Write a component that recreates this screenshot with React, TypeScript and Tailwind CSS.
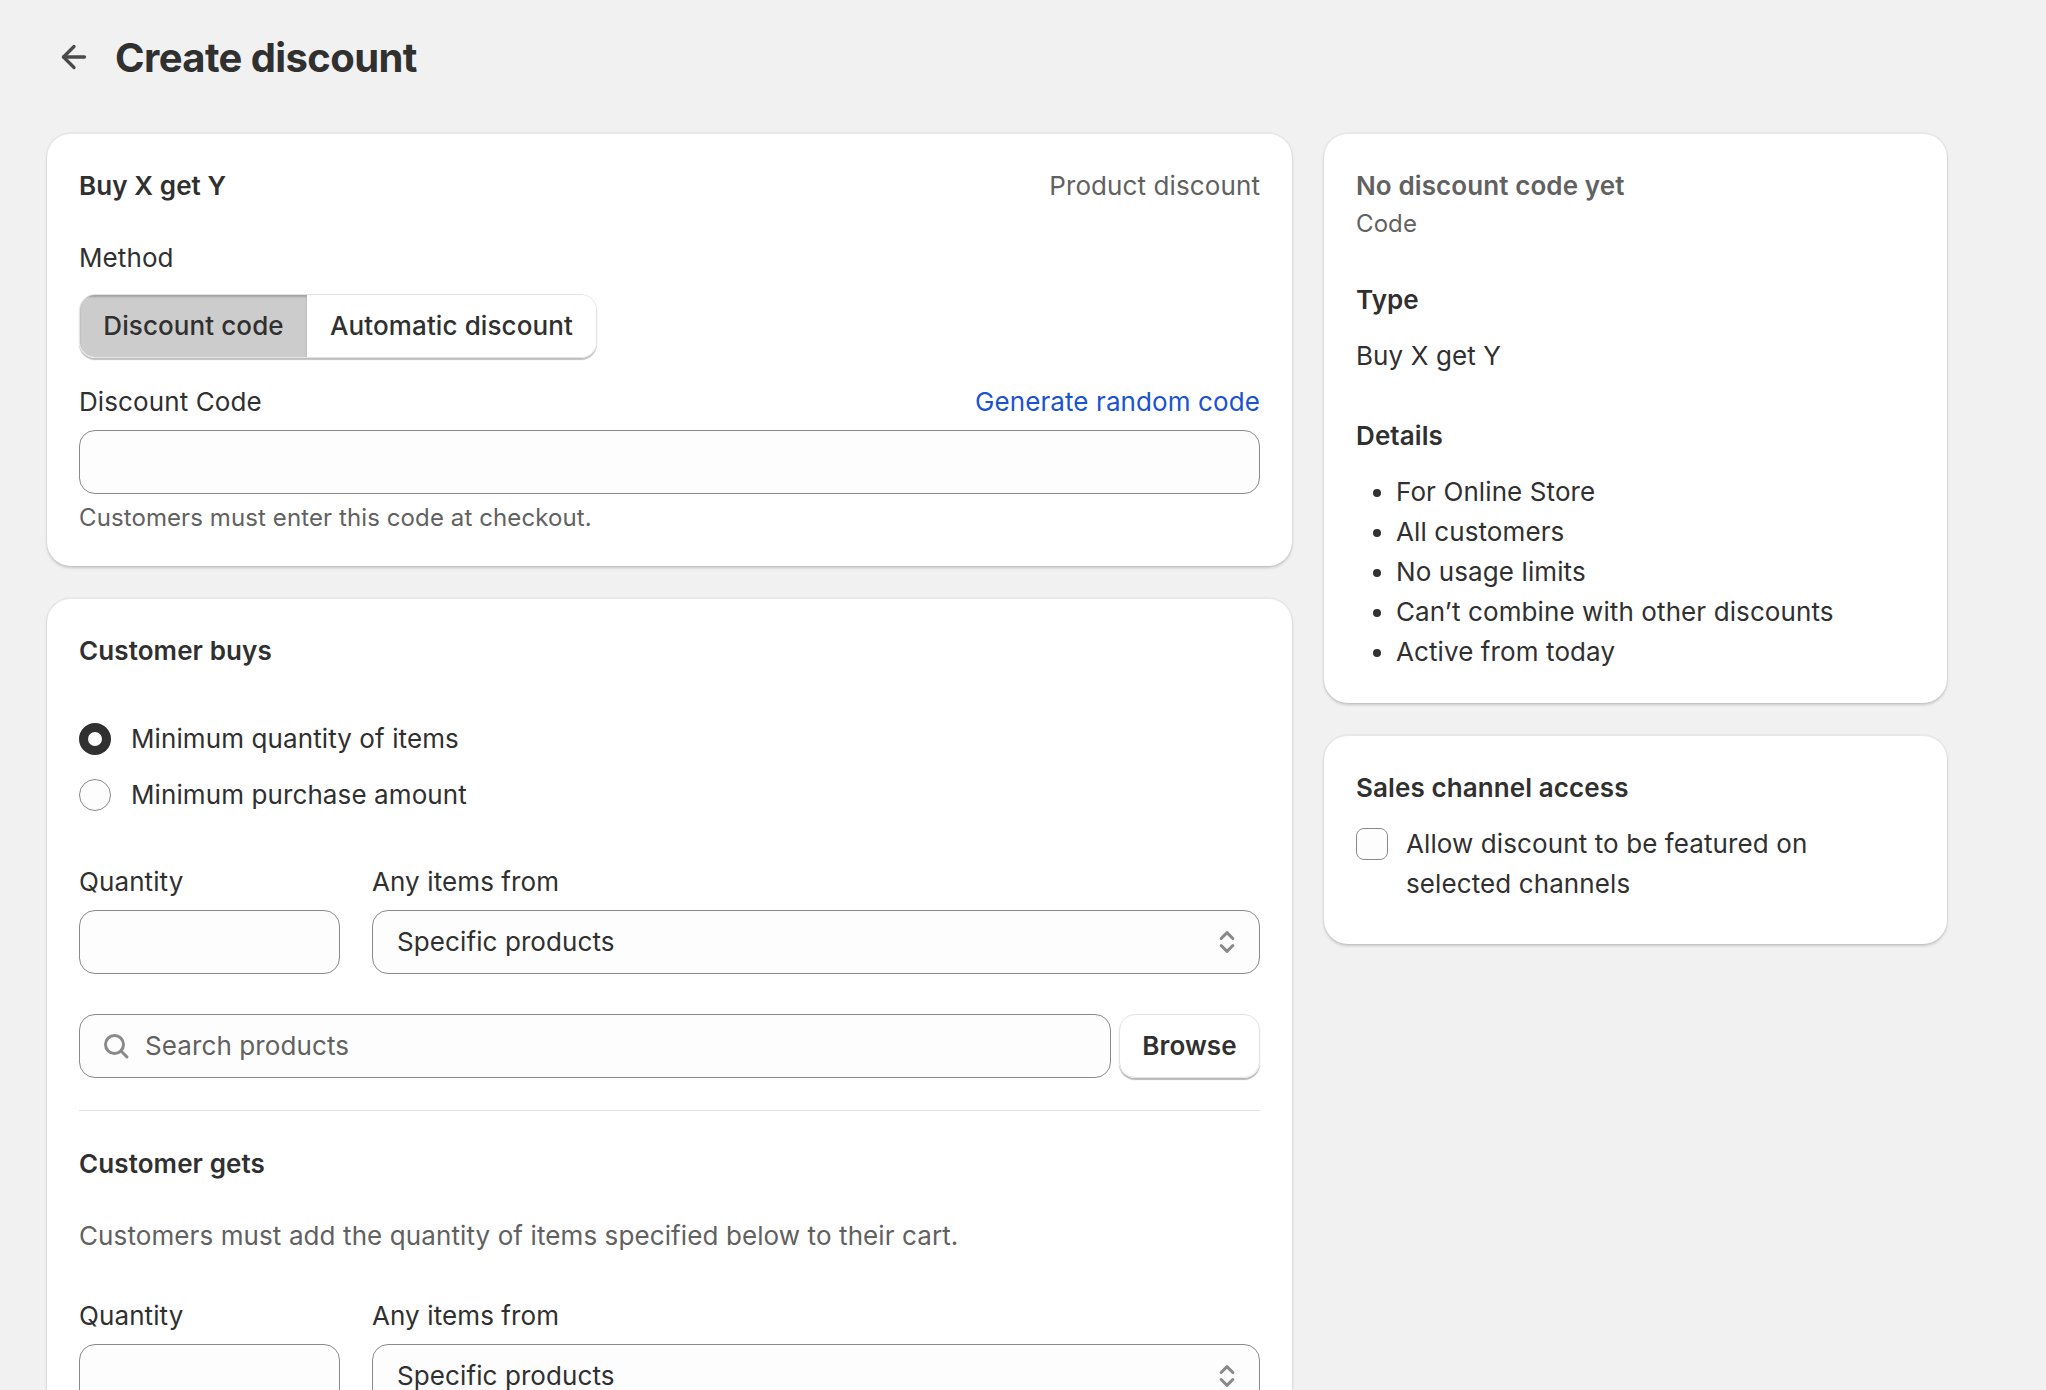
import { ArrowLeft, ChevronsUpDown } from 'lucide-react';

const FONT = "font-['Inter','Liberation_Sans',sans-serif]";
const CARD = 'rounded-[24px] bg-white border-t border-[#e8e8e8] shadow-[0_2px_3px_rgba(0,0,0,0.18),0_0_0_1px_rgba(0,0,0,0.03)]';
const FIELD = 'h-16 rounded-2xl border border-[#8a8a8a] bg-[#fdfdfd]';

const SUMMARY = ['For Online Store', 'All customers', 'No usage limits', 'Can’t combine with other discounts', 'Active from today'];

function SearchIcon() {
	return (
		<svg width="28" height="28" viewBox="0 0 28 28" fill="none" stroke="#8a8a8a" strokeWidth="3" strokeLinecap="round">
			<circle cx="12.5" cy="12.5" r="9" />
			<path d="M19.5 19.5 25 25" />
		</svg>
	);
}

function QuantityRow() {
	return (
		<div className="flex gap-8">
			<div className="w-[261px] shrink-0">
				<div className="h-10 leading-10 mb-2">Quantity</div>
				<div className={FIELD}></div>
			</div>
			<div className="flex-1">
				<div className="h-10 leading-10 mb-2">Any items from</div>
				<div className={`${FIELD} flex items-center justify-between pl-6 pr-[18px]`}>
					<span>Specific products</span>
					<ChevronsUpDown size={28} strokeWidth={2.6} className="text-[#8a8a8a]" />
				</div>
			</div>
		</div>
	);
}

export default function App() {
	return (
		<div className={`${FONT} h-screen overflow-hidden bg-[#f1f1f1] text-[26px] leading-10 tracking-[0.1px] text-[#303030]`}>
			{/* Header */}
			<div className="h-[133px] flex items-start pl-[56px] pt-[30px]">
				<ArrowLeft size={36} strokeWidth={2.2} className="text-[#4a4a4a] mt-[9px]" />
				<h1 className="ml-[23px] text-[40px] leading-[56px] font-bold tracking-[-0.6px]">Create discount</h1>
			</div>

			<div className="flex gap-8 pl-[47px] w-[1947px]">
				{/* Main column */}
				<div className="w-[1245px] shrink-0 flex flex-col gap-8">
					<div className={`${CARD} h-[433px] px-8 pt-8`}>
						<div className="flex justify-between">
							<span className="font-semibold">Buy X get Y</span>
							<span className="text-[#616161]">Product discount</span>
						</div>
						<div className="mt-8">Method</div>
						<div className="mt-4 w-fit flex h-16 rounded-2xl overflow-hidden border border-[#e3e3e3] shadow-[0_2px_1px_rgba(0,0,0,0.25)]">
							<div className="w-[227px] flex items-center justify-center bg-[#cccccc] font-medium shadow-[inset_0_2px_2px_rgba(0,0,0,0.2)]">Discount code</div>
							<div className="w-[289px] flex items-center justify-center bg-white font-medium">Automatic discount</div>
						</div>
						<div className="mt-6 flex justify-between">
							<span>Discount Code</span>
							<span className="text-[#1a53d1]">Generate random code</span>
						</div>
						<div className={`${FIELD} mt-2`}></div>
						<div className="mt-1 text-[24px] text-[#616161]">Customers must enter this code at checkout.</div>
					</div>

					<div className={`${CARD} px-8 pt-8 pb-10`}>
						<div className="font-semibold">Customer buys</div>
						<div className="mt-[48px] flex items-center gap-5 h-10">
							<div className="w-8 h-8 rounded-full border-[9px] border-[#303030] bg-white"></div>
							<span>Minimum quantity of items</span>
						</div>
						<div className="mt-4 flex items-center gap-5 h-10">
							<div className="w-8 h-8 rounded-full border border-[#8a8a8a] bg-[#fdfdfd]"></div>
							<span>Minimum purchase amount</span>
						</div>
						<div className="mt-[47px]">
							<QuantityRow />
						</div>
						<div className="mt-10 flex gap-2">
							<div className={`${FIELD} flex-1 flex items-center gap-[15px] pl-[22px] text-[#616161]`}>
								<SearchIcon />
								<span>Search products</span>
							</div>
							<div className="w-[141px] h-16 rounded-2xl flex items-center justify-center font-semibold border border-[#e3e3e3] shadow-[0_2px_1px_rgba(0,0,0,0.28)]">Browse</div>
						</div>
						<div className="mt-8 border-t border-[#e3e3e3]"></div>
						<div className="mt-[33px] font-semibold">Customer gets</div>
						<div className="mt-8 text-[#616161]">Customers must add the quantity of items specified below to their cart.</div>
						<div className="mt-[40px]">
							<QuantityRow />
						</div>
					</div>
				</div>

				{/* Summary column */}
				<div className="flex-1 flex flex-col gap-8">
					<div className={`${CARD} h-[570px] px-8 pt-8`}>
						<div className="font-semibold text-[#616161]">No discount code yet</div>
						<div className="text-[24px] leading-[36px] text-[#616161]">Code</div>
						<div className="mt-[38px] font-semibold">Type</div>
						<div className="mt-4">Buy X get Y</div>
						<div className="mt-10 font-semibold">Details</div>
						<ul className="mt-4 pl-10 list-disc">
							{SUMMARY.map(item => (
								<li key={item}>{item}</li>
							))}
						</ul>
					</div>
					<div className={`${CARD} h-[209px] px-8 pt-8`}>
						<div className="font-semibold">Sales channel access</div>
						<div className="mt-4 flex gap-[18px]">
							<div className="w-8 h-8 mt-1 shrink-0 rounded-lg border border-[#8a8a8a] bg-[#fdfdfd]"></div>
							<div className="w-[460px]">Allow discount to be featured on selected channels</div>
						</div>
					</div>
				</div>
			</div>
		</div>
	);
}
